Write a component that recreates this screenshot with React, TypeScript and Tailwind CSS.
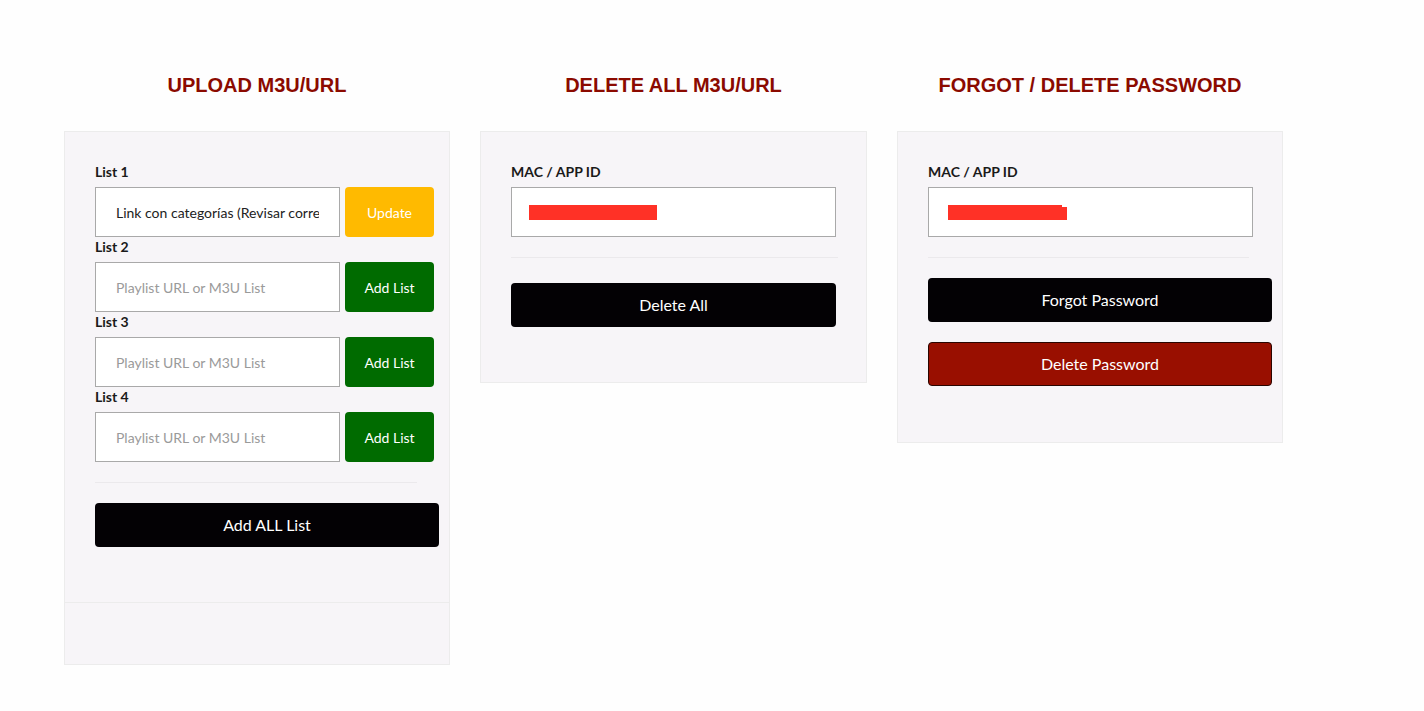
import React from "react";

const lato = { fontFamily: "Lato, 'Noto Sans', sans-serif" };

function Label({ children }: { children: React.ReactNode }) {
  return (
    <div className="h-[20px] leading-[20px] text-[14px] font-bold text-[#1a1a1a] mb-[5px]">{children}</div>
  );
}

function ListRow({ n, value, update }: { n: number; value?: string; update?: boolean }) {
  return (
    <div>
      <Label>List {n}</Label>
      <div className="flex gap-[5px] w-[339px]">
        <input
          readOnly
          value={value ?? ""}
          placeholder="Playlist URL or M3U List"
          className="w-[245px] h-[50px] border border-[#a9a9a9] bg-white px-[20px] text-[14px] text-[#222] placeholder:text-[#9a9a9a] outline-none"
        />
        <button
          className={`w-[89px] h-[50px] rounded-[4px] text-white text-[14px] ${update ? "bg-[#ffba00]" : "bg-[#006b00]"}`}
        >
          {update ? "Update" : "Add List"}
        </button>
      </div>
    </div>
  );
}

function MacInput({ bar }: { bar: "a" | "b" }) {
  return (
    <div className="w-[325px] h-[50px] border border-[#a9a9a9] bg-white flex items-center">
      {bar === "a" ? (
        <div className="ml-[17px] w-[128px] h-[15px] bg-[#ff3126]" />
      ) : (
        <div className="ml-[19px] flex items-end">
          <div className="w-[114px] h-[15px] bg-[#ff3126]" />
          <div className="w-[5px] h-[13px] bg-[#ff3126]" />
        </div>
      )}
    </div>
  );
}

export default function App() {
  return (
    <div className="min-h-[711px] bg-[#fefefe] pl-[64px] pt-[73px]" style={lato}>
      <div className="flex gap-[30px] items-start">
        {/* Column 1 */}
        <div className="w-[386px]">
          <h2
            className="h-[24px] leading-[24px] text-center text-[20px] font-bold text-[#8b0a00] mb-[34px]"
            style={{ fontFamily: "'Liberation Sans', Arial, sans-serif" }}
          >
            UPLOAD M3U/URL
          </h2>
          <div className="border border-[#ececec] bg-[#f7f5f8]">
            <div className="pt-[30px] px-[30px] pb-[55px] border-b border-[#ececec]">
              <ListRow n={1} value="Link con categorías (Revisar correo)" update />
              <ListRow n={2} />
              <ListRow n={3} />
              <ListRow n={4} />
              <div className="mt-[20px] w-[322px] h-px bg-[#ebe9ec]" />
              <button className="mt-[20px] w-[344px] h-[44px] rounded-[4px] bg-[#030104] text-white text-[16px]">
                Add ALL List
              </button>
            </div>
            <div className="h-[61px]" />
          </div>
        </div>

        {/* Column 2 */}
        <div className="w-[387px]">
          <h2
            className="h-[24px] leading-[24px] text-center text-[20px] font-bold text-[#8b0a00] mb-[34px]"
            style={{ fontFamily: "'Liberation Sans', Arial, sans-serif" }}
          >
            DELETE ALL M3U/URL
          </h2>
          <div className="border border-[#ececec] bg-[#f7f5f8] pt-[30px] px-[30px] pb-[55px]">
            <Label>MAC / APP ID</Label>
            <MacInput bar="a" />
            <div className="mt-[20px] w-[327px] h-px bg-[#ebe9ec]" />
            <button className="mt-[25px] w-[325px] h-[44px] rounded-[4px] bg-[#030104] text-white text-[16px]">
              Delete All
            </button>
          </div>
        </div>

        {/* Column 3 */}
        <div className="w-[386px]">
          <h2
            className="h-[24px] leading-[24px] text-center text-[20px] font-bold text-[#8b0a00] mb-[34px]"
            style={{ fontFamily: "'Liberation Sans', Arial, sans-serif" }}
          >
            FORGOT / DELETE PASSWORD
          </h2>
          <div className="border border-[#ececec] bg-[#f7f5f8] pt-[30px] px-[30px] pb-[56px]">
            <Label>MAC / APP ID</Label>
            <div className="w-[324px]">
              <MacInput bar="b" />
            </div>
            <div className="mt-[20px] w-[321px] h-px bg-[#ebe9ec]" />
            <button className="mt-[20px] w-[344px] h-[44px] rounded-[4px] bg-[#030104] text-white text-[16px]">
              Forgot Password
            </button>
            <button className="block mt-[20px] w-[344px] h-[44px] rounded-[4px] bg-[#990f00] border border-[#2a0500] text-white text-[16px]">
              Delete Password
            </button>
          </div>
        </div>
      </div>
    </div>
  );
}
